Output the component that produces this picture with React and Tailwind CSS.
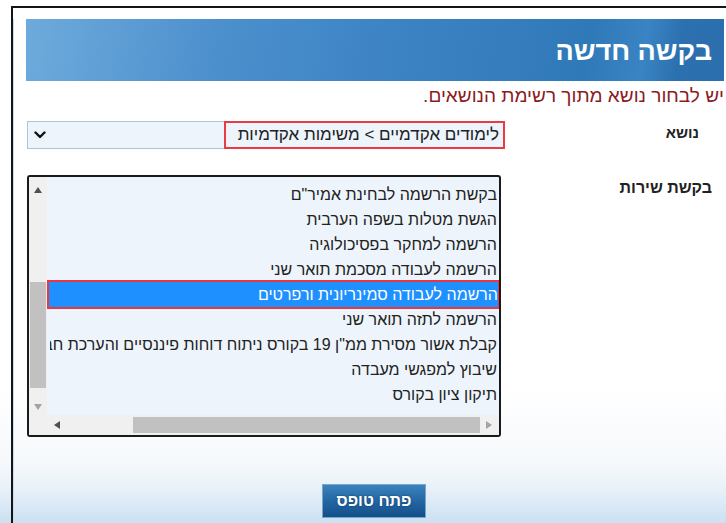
import React, { useState } from 'react';

const requestTypes = [
    'בקשת הרשמה לבחינת אמיר"ם',
    'הגשת מטלות בשפה הערבית',
    'הרשמה למחקר בפסיכולוגיה',
    'הרשמה לעבודה מסכמת תואר שני',
    'הרשמה לעבודה סמינריונית ורפרטים',
    'הרשמה לתזה תואר שני',
    'קבלת אשור מסירת ממ"ן 19 בקורס ניתוח דוחות פיננסיים והערכת חברות',
    'שיבוץ למפגשי מעבדה',
    'תיקון ציון בקורס',
];

const font = { fontFamily: '"Liberation Sans", Arial, sans-serif' };

const Chevron = () => (
    <svg width="12" height="8" viewBox="0 0 12 8">
        <path d="M1.5 1.5 L6 6 L10.5 1.5" fill="none" stroke="#111" strokeWidth="2.4" strokeLinecap="round" strokeLinejoin="round" />
    </svg>
);

const Arrow = ({ dir, color }) => {
    const pts = {
        up: '0,6 4,0 8,6',
        down: '0,0 4,6 8,0',
        left: '6,0 0,4 6,8',
        right: '0,0 6,4 0,8',
    }[dir];
    const w = dir === 'up' || dir === 'down' ? 8 : 6;
    const h = dir === 'up' || dir === 'down' ? 6 : 8;
    return (
        <svg width={w} height={h} viewBox={`0 0 ${w} ${h}`}>
            <polygon points={pts} fill={color} />
        </svg>
    );
};

const ServiceList = ({ selected, onSelect }) => (
    <div className="w-[474px] h-[262px] border-2 border-[#1a1a1a] rounded-[3px] bg-[#edf4fb] flex flex-col overflow-hidden">
        <div className="flex flex-1 min-h-0">
            {/* vertical scrollbar sits on the left in rtl */}
            <div className="w-[18px] bg-[#f0f0f0] flex flex-col items-center">
                <div className="h-[17px] flex items-center justify-center mt-[4px]"><Arrow dir="up" color="#505050" /></div>
                <div className="flex-1 w-full px-[1px] flex flex-col">
                    <div className="h-[84px]" />
                    <div className="h-[106px] bg-[#c1c1c1]" />
                </div>
                <div className="h-[17px] flex items-center justify-center"><Arrow dir="down" color="#a3a3a3" /></div>
            </div>
            <div dir="rtl" className="flex-1 overflow-hidden pt-[5px] pr-[2px] pl-[3px]">
                {requestTypes.map((t) => (
                    <div
                        key={t}
                        onClick={() => onSelect(t)}
                        className={`h-[25px] leading-[25px] text-[16px] whitespace-nowrap overflow-hidden cursor-default ${selected === t ? 'bg-[#1e90ff] text-white outline-2 outline-[#e8383d] -mr-[1px] -ml-[1px]' : 'text-[#222]'}`}
                    >
                        {t}
                    </div>
                ))}
            </div>
        </div>
        <div className="h-[20px] flex bg-[#f0f0f0]">
            <div className="w-[18px]" />
            <div className="w-[22px] flex items-center justify-center"><Arrow dir="left" color="#505050" /></div>
            <div className="flex-1 flex items-center">
                <div className="ml-[65px] h-[16px] w-[347px] bg-[#c1c1c1]" />
            </div>
            <div className="w-[20px] flex items-center justify-center"><Arrow dir="right" color="#a3a3a3" /></div>
        </div>
    </div>
);

const App = () => {
    const [selected, setSelected] = useState('הרשמה לעבודה סמינריונית ורפרטים');

    return (
        <div
            style={font}
            className="w-[726px] h-[523px] pt-[6px] pl-[11px] overflow-hidden bg-[linear-gradient(to_bottom,#ffffff_0%,#ffffff_74%,#f6f9fc_88%,#eaf2f9_93%,#cbe0f2_100%)]"
        >
            <div className="h-full border-t-2 border-l-2 border-[#151515]">
                <div className="h-full border-l border-[#c9dcee]">
                    {/* header banner */}
                    <div className="ml-[12px] mr-[2px] mt-[11px] h-[62px] flex items-center justify-end pr-[12px] bg-[linear-gradient(100deg,#6eabdc_0%,#4c8fcd_28%,#3b82c3_55%,#3079b9_80%,#3a84c4_88%,#2c70af_93%,#2d6fae_100%)]">
                        <h1 dir="rtl" className="text-white text-[27px] font-bold leading-none pt-[2px]">בקשה חדשה</h1>
                    </div>

                    <p dir="rtl" className="mt-[4px] pr-[2px] text-[19px] leading-[21px] text-[#8b1a22] whitespace-nowrap">
                        יש לבחור נושא מתוך רשימת הנושאים.
                    </p>

                    {/* topic row */}
                    <div className="mt-[15px] flex justify-between pr-[27px]">
                        <div className="ml-[13px] w-[478px] h-[28px] flex border border-[#a9c5e0] bg-[#edf4fb]">
                            <div className="w-[22px] flex items-center justify-center pl-[2px]"><Chevron /></div>
                            <div className="flex-1" />
                            <div dir="rtl" className="w-[281px] -my-[1px] -mr-[1px] border-2 border-[#eb3a40] flex items-center pr-[4px] text-[17px] text-[#222] whitespace-nowrap">
                                לימודים אקדמיים &gt; משימות אקדמיות
                            </div>
                        </div>
                        <span dir="rtl" className="mt-[1px] text-[15px] font-bold text-[#222]">נושא</span>
                    </div>

                    {/* service request row */}
                    <div className="mt-[26px] flex justify-between pr-[14px]">
                        <div className="ml-[13px]">
                            <ServiceList selected={selected} onSelect={setSelected} />
                        </div>
                        <span dir="rtl" className="mt-[1px] text-[16px] font-bold text-[#222]">בקשת שירות</span>
                    </div>

                    <div className="mt-[47px] flex justify-center pl-[8px]">
                        <button
                            dir="rtl"
                            className="w-[104px] h-[34px] border border-[#7aa6cc] bg-[linear-gradient(to_bottom,#3c83bd_0%,#2466a2_50%,#134f8a_100%)] text-white text-[16px] font-bold [text-shadow:0_0_2px_#0b3a66]"
                        >
                            פתח טופס
                        </button>
                    </div>
                </div>
            </div>
        </div>
    );
};

export default App;
